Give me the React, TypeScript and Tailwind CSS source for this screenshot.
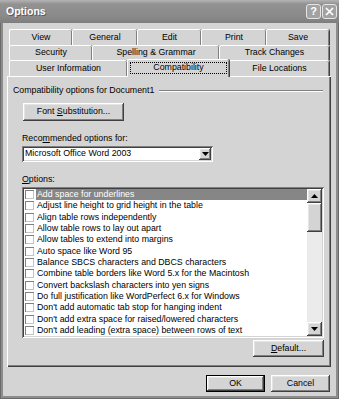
import React from "react";

const raised =
  "bg-[#d4d4d4] shadow-[inset_-1px_-1px_0_#404040,inset_1px_1px_0_#ffffff,inset_-2px_-2px_0_#808080,inset_2px_2px_0_#e4e4e4]";
const sunken =
  "shadow-[inset_1px_1px_0_#808080,inset_-1px_-1px_0_#ffffff,inset_2px_2px_0_#404040,inset_-2px_-2px_0_#d4d4d4]";

function Tab({ w, children }: { w: number; children: React.ReactNode }) {
  return (
    <div
      className="h-full flex items-center justify-center rounded-t-[2px] border-t border-l border-white shadow-[inset_-1px_0_0_#808080,1px_0_0_#404040] shrink-0"
      style={{ width: w }}
    >
      {children}
    </div>
  );
}

function TriUp() {
  return (
    <svg width="7" height="4" viewBox="0 0 7 4">
      <path d="M3.5 0 L7 4 L0 4 Z" fill="#000" />
    </svg>
  );
}
function TriDown() {
  return (
    <svg width="7" height="4" viewBox="0 0 7 4">
      <path d="M0 0 L7 0 L3.5 4 Z" fill="#000" />
    </svg>
  );
}

const items = [
  "Add space for underlines",
  "Adjust line height to grid height in the table",
  "Align table rows independently",
  "Allow table rows to lay out apart",
  "Allow tables to extend into margins",
  "Auto space like Word 95",
  "Balance SBCS characters and DBCS characters",
  "Combine table borders like Word 5.x for the Macintosh",
  "Convert backslash characters into yen signs",
  "Do full justification like WordPerfect 6.x for Windows",
  "Don't add automatic tab stop for hanging indent",
  "Don't add extra space for raised/lowered characters",
  "Don't add leading (extra space) between rows of text",
];

export default function App() {
  return (
    <div className="w-[339px] h-[399px] flex flex-col bg-[#8c8c8c] font-['Liberation_Sans',Arial,sans-serif] text-[8.8px] text-black overflow-hidden shadow-[inset_0_0_0_1px_#6a6a6a]">
      {/* Title bar */}
      <div className="h-[23px] shrink-0 flex items-center justify-between pl-[6px] pr-[2px] bg-[linear-gradient(#b4b4b4,#929292_18%,#8a8a8a_70%,#7e7e7e)]">
        <span className="text-white font-bold text-[10.5px] [text-shadow:1px_1px_0_#5a5a5a] leading-none">
          Options
        </span>
        <div className="flex gap-[1px]">
          <div className="w-[15px] h-[15px] rounded-[3px] border border-[#e6e6e6] bg-[#a2a2a2] flex items-center justify-center text-white font-bold text-[11px] leading-none">
            ?
          </div>
          <div className="w-[15px] h-[15px] rounded-[3px] border border-[#e6e6e6] bg-[#a2a2a2] flex items-center justify-center">
            <svg width="9" height="9" viewBox="0 0 9 9">
              <path d="M1 1 L8 8 M8 1 L1 8" stroke="#fff" strokeWidth="1.7" />
            </svg>
          </div>
        </div>
      </div>

      {/* Body */}
      <div className="flex-1 mx-[3px] mb-[3px] bg-[#d4d4d4] flex flex-col pt-[6px]">
        {/* tab rows */}
        <div className="flex h-[16px] ml-[6px]">
          <Tab w={63}>View</Tab>
          <Tab w={65}>General</Tab>
          <Tab w={64}>Edit</Tab>
          <Tab w={65}>Print</Tab>
          <Tab w={63}>Save</Tab>
        </div>
        <div className="flex h-[15px] ml-[6px]">
          <Tab w={83}>Security</Tab>
          <Tab w={127}>Spelling &amp; Grammar</Tab>
          <Tab w={110}>Track Changes</Tab>
        </div>
        <div className="flex h-[16px] ml-[6px] items-end">
          <div className="h-[16px] flex">
            <Tab w={118}>User Information</Tab>
          </div>
          <div className="relative top-[1px] z-10 h-[18px] w-[102px] shrink-0 bg-[#d4d4d4] rounded-t-[2px] border-t border-l border-white shadow-[inset_-1px_0_0_#808080,1px_0_0_#404040] p-[2px] pb-[3px]">
            <div className="w-full h-full outline outline-1 outline-dotted outline-black -outline-offset-1 flex items-center justify-center">
              Compatibility
            </div>
          </div>
          <div className="h-[16px] flex">
            <Tab w={100}>File Locations</Tab>
          </div>
        </div>

        {/* Panel */}
        <div className="ml-[4px] w-[324px] h-[291px] shrink-0 flex flex-col shadow-[inset_1px_1px_0_#ffffff,inset_-1px_-1px_0_#404040,inset_-2px_-2px_0_#808080]">
          <div className="mt-[9px] h-[12px] flex items-center pl-[6px] pr-[8px]">
            <span>Compatibility options for Document1</span>
            <div className="flex-1 ml-[5px] h-[2px] border-t border-t-[#808080] border-b border-b-white" />
          </div>

          <div className={`mt-[6px] ml-[16px] w-[101px] h-[18px] flex items-center justify-center ${raised}`}>
            <span>
              Font <span className="underline underline-offset-1">S</span>ubstitution...
            </span>
          </div>

          <div className="mt-[11px] ml-[15px] h-[12px] leading-[12px]">
            Reco<span className="underline underline-offset-1">m</span>mended options for:
          </div>

          <div className={`mt-[2px] ml-[15px] w-[191px] h-[16px] bg-white flex items-center ${sunken}`}>
            <div className="flex-1 pl-[3px]">Microsoft Office Word 2003</div>
            <div className={`w-[12px] h-[12px] mr-[2px] flex items-center justify-center ${raised}`}>
              <TriDown />
            </div>
          </div>

          <div className="mt-[11px] ml-[15px] h-[12px] leading-[12px]">
            <span className="underline underline-offset-1">O</span>ptions:
          </div>

          <div className={`mt-[2px] ml-[15px] w-[302px] h-[151px] bg-white flex p-[2px] ${sunken}`}>
            <div className="flex-1 flex flex-col overflow-hidden">
              {items.map((t, i) => (
                <div key={t} className="h-[11.33px] shrink-0 flex items-center">
                  <div className="w-[9px] h-[9px] ml-[1px] shrink-0 bg-white shadow-[inset_1px_1px_0_#808080,inset_-1px_-1px_0_#c4c4c4]" />
                  <div
                    className={`ml-[2px] flex-1 h-full flex items-center pl-[1px] whitespace-nowrap ${
                      i === 0 ? "bg-[#868686] text-white" : ""
                    }`}
                  >
                    {t}
                  </div>
                </div>
              ))}
            </div>
            <div className="w-[15px] shrink-0 flex flex-col bg-[#ebebeb]">
              <div className={`h-[14px] flex items-center justify-center ${raised}`}>
                <TriUp />
              </div>
              <div className={`h-[29px] ${raised}`} />
              <div className="flex-1" />
              <div className={`h-[14px] flex items-center justify-center ${raised}`}>
                <TriDown />
              </div>
            </div>
          </div>

          <div className={`mt-[2px] self-end mr-[7px] w-[71px] h-[17px] flex items-center justify-center ${raised}`}>
            <span>
              <span className="underline underline-offset-1">D</span>efault...
            </span>
          </div>
        </div>

        {/* bottom buttons */}
        <div className="mt-[8px] flex justify-end gap-[6px] pr-[6px]">
          <div className="w-[59px] h-[17px] border border-black flex">
            <div className={`flex-1 flex items-center justify-center ${raised}`}>OK</div>
          </div>
          <div className={`w-[59px] h-[17px] flex items-center justify-center ${raised}`}>Cancel</div>
        </div>
      </div>
    </div>
  );
}
